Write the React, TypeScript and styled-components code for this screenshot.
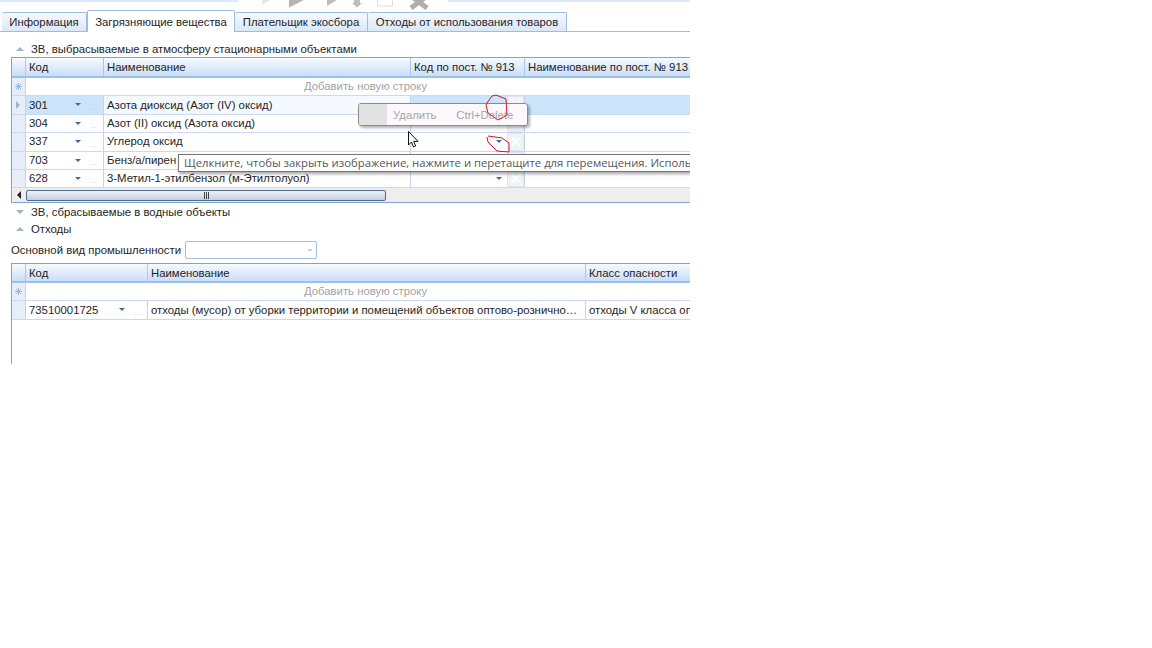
import styled, { createGlobalStyle } from "styled-components";
import { ReactNode } from "react";

const Global = createGlobalStyle`
  html, body { margin: 0; padding: 0; background: #fff; }
  body { font-family: "Liberation Sans", Arial, sans-serif; font-size: 11.35px; color: #1e1e1e; }
`;

const Page = styled.div`
  position: relative;
  width: 690px;
  height: 648px;
  overflow: hidden;
`;

const TopBar = styled.div`
  height: 10px;
`;

const TopLine = styled.div`
  height: 2px;
  background: linear-gradient(to right, #dce8f7 238px, #fff 238px, #fff 448px, #dce8f7 448px);
`;

const ToolIcons = styled.svg`
  position: absolute;
  left: 250px;
  top: 0;
`;

const Tabs = styled.div`
  display: flex;
  align-items: flex-end;
  height: 21px;
  padding-left: 2px;
  border-bottom: 1px solid #9fbcdc;
`;

const Tab = styled.div<{ $active?: boolean; $width: number }>`
  width: ${(p) => p.$width}px;
  height: ${(p) => (p.$active ? 22 : 19)}px;
  box-sizing: border-box;
  display: flex;
  align-items: center;
  justify-content: center;
  border: 1px solid #9fbcdc;
  border-bottom: 0;
  border-left-width: ${(p) => (p.$active ? 1 : 0)}px;
  background: ${(p) => (p.$active ? "#fff" : "linear-gradient(#f6fafe, #d9e7f7)")};
  margin-bottom: ${(p) => (p.$active ? -1 : 0)}px;
  border-radius: 2px 2px 0 0;
  white-space: nowrap;
`;

const Spacer = styled.div<{ $height: number }>`
  height: ${(p) => p.$height}px;
`;

const Section = styled.div`
  display: flex;
  align-items: center;
  height: 17px;
  padding-left: 16px;
  gap: 7px;
`;

const Arrow = styled.span<{ $down?: boolean }>`
  width: 0;
  height: 0;
  border-left: 4px solid transparent;
  border-right: 4px solid transparent;
  ${(p) => (p.$down ? "border-top: 4px solid #9db4cf;" : "border-bottom: 4px solid #9db4cf;")}
`;

const GridBox = styled.div<{ $height: number; $open?: boolean }>`
  margin-left: 11px;
  height: ${(p) => p.$height}px;
  box-sizing: border-box;
  border-left: 1px solid #7da4d3;
  border-top: 1px solid #7da4d3;
  ${(p) => (p.$open ? "" : "border-bottom: 1px solid #7da4d3;")}
  overflow: hidden;
`;

const Row = styled.div<{ $columns: string; $height?: number }>`
  display: grid;
  grid-template-columns: ${(p) => p.$columns};
  height: ${(p) => p.$height ?? 18.4}px;
  box-sizing: border-box;
`;

const HeaderRow = styled(Row)`
  background: linear-gradient(#f7fafe, #c9def8);
  border-bottom: 2px solid #9cc0ec;
`;

const HeaderCell = styled.div`
  display: flex;
  align-items: center;
  padding-left: 3px;
  border-left: 1px solid #a8c8ef;
  white-space: nowrap;
  overflow: hidden;
`;

const Indicator = styled.div`
  background: #e6eefa;
  border-bottom: 1px solid #c9daf0;
  display: flex;
  align-items: center;
  justify-content: center;
`;

const NewRow = styled.div`
  display: flex;
  align-items: center;
  justify-content: center;
  padding: 0 0 1px 15px;
  color: #a3a3a3;
  border-left: 1px solid #c3d6ee;
  border-bottom: 1px solid #c9daf0;
  white-space: nowrap;
`;

const cellBackground = { on: "#cce4fb", light: "#f4f9ff", off: "#fff" };

const Cell = styled.div<{ $tone?: keyof typeof cellBackground }>`
  display: flex;
  align-items: center;
  padding: 0 5px 1px 3px;
  position: relative;
  background: ${(p) => cellBackground[p.$tone ?? "off"]};
  border-left: 1px solid #c3d6ee;
  border-bottom: 1px solid #c9daf0;
  white-space: nowrap;
  overflow: hidden;
`;

const Ellipsis = styled.span`
  overflow: hidden;
  text-overflow: ellipsis;
`;

const Drop = styled.span<{ $right: number; $faint?: boolean }>`
  position: absolute;
  right: ${(p) => p.$right}px;
  top: 7px;
  width: 0;
  height: 0;
  border-left: 3px solid transparent;
  border-right: 3px solid transparent;
  border-top: 3px solid ${(p) => (p.$faint ? "#c9ced6" : "#3f6da3")};
`;

const Dots = styled.span`
  position: absolute;
  right: 6px;
  bottom: 3px;
  font-size: 8px;
  line-height: 6px;
  color: #c5ccd6;
`;

const ClearButton = styled.span`
  position: absolute;
  right: 0;
  top: 0;
  bottom: 0;
  width: 17px;
  box-sizing: border-box;
  display: flex;
  align-items: center;
  justify-content: center;
  background: #f1f4f7;
  border: 1px solid #dfe5ec;
  border-radius: 2px;
`;

const Scroll = styled.div`
  display: flex;
  align-items: center;
  height: 14px;
  background: #efedee;
  padding-left: 5px;
  gap: 5px;
`;

const ScrollLeft = styled.span`
  width: 0;
  height: 0;
  border-top: 4px solid transparent;
  border-bottom: 4px solid transparent;
  border-right: 4px solid #222;
`;

const Thumb = styled.div`
  width: 360px;
  height: 11px;
  box-sizing: border-box;
  border: 1px solid #4f6d90;
  border-radius: 2px;
  background: linear-gradient(#eef2f6, #c2cfdd);
  display: flex;
  align-items: center;
  justify-content: center;
`;

const Grip = styled.span`
  width: 5px;
  height: 7px;
  background: repeating-linear-gradient(to right, #444 0, #444 1px, transparent 1px, transparent 2px);
`;

const FieldRow = styled.div`
  display: flex;
  align-items: center;
  height: 18px;
  margin: 4px 0;
  padding-left: 11px;
  gap: 4px;
`;

const Combo = styled.div`
  position: relative;
  width: 132px;
  height: 18px;
  box-sizing: border-box;
  border: 1px solid #9fc0e6;
  border-radius: 2px;
`;

const Menu = styled.div`
  position: absolute;
  left: 358px;
  top: 103px;
  width: 170px;
  height: 23px;
  box-sizing: border-box;
  display: flex;
  align-items: center;
  background: #fdf8fc;
  border: 1px solid #8c8c8c;
  border-radius: 3px;
  box-shadow: 2px 2px 3px rgba(0, 0, 0, 0.3);
  color: #a5a5a5;
  overflow: hidden;
`;

const MenuGutter = styled.div`
  width: 28px;
  align-self: stretch;
  background: #e2e2e2;
  margin-right: 6px;
`;

const MenuShortcut = styled.span`
  margin-left: 20px;
`;

const Tooltip = styled.div`
  position: absolute;
  left: 178px;
  top: 154px;
  width: 530px;
  height: 18px;
  box-sizing: border-box;
  padding: 0 0 1px 5px;
  display: flex;
  align-items: center;
  background: #fff;
  border: 1px solid #767676;
  box-shadow: 1px 2px 3px rgba(0, 0, 0, 0.35);
  color: #575757;
  font-family: "Open Sans", "Liberation Sans", sans-serif;
  font-size: 11.3px;
  white-space: nowrap;
`;

const Overlay = styled.svg`
  position: absolute;
  left: 0;
  top: 0;
  pointer-events: none;
`;

const topColumns = "13px 78px 307px 114px 1fr";
const wasteColumns = "13px 122px 438px 1fr";

const substances = [
  ["301", "Азота диоксид (Азот (IV) оксид)"],
  ["304", "Азот (II) оксид (Азота оксид)"],
  ["337", "Углерод оксид"],
  ["703", "Бенз/а/пирен"],
  ["628", "3-Метил-1-этилбензол (м-Этилтолуол)"],
];

function ClearIcon() {
  return (
    <svg width="9" height="9" viewBox="0 0 9 9">
      <path d="M1 1l7 7M8 1L1 8" stroke="#fff" strokeWidth="2" />
    </svg>
  );
}

function SectionTitle({ down, children }: { down?: boolean; children: ReactNode }) {
  return (
    <Section>
      <Arrow $down={down} />
      <span>{children}</span>
    </Section>
  );
}

function AddRow() {
  return (
    <Row $columns="13px 1fr">
      <Indicator>
        <svg width="7" height="7" viewBox="0 0 7 7">
          <path d="M3.500 0v7M0 3.500h7M1 1l5 5M6 1L1 6" stroke="#9cbbe0" />
        </svg>
      </Indicator>
      <NewRow>Добавить новую строку</NewRow>
    </Row>
  );
}

export default function App() {
  return (
    <Page>
      <Global />
      <TopBar>
        <TopLine />
      </TopBar>
      <ToolIcons width="190" height="10" viewBox="0 0 190 10">
        <path d="M20 0L12 5V0z" fill="#e6e6e6" />
        <path d="M39 0V7.500L54 0z" fill="#b4b4b4" />
        <path d="M77 0V6L87 0z" fill="#bdbdbd" />
        <path d="M104 0h6v3h2l-5 4.500L102 3h2z" fill="#bcbcbc" />
        <rect x="127.500" y="-2" width="15" height="8" fill="#fff" stroke="#dedede" />
        <path d="M161-4L177 8M177-4L161 8" fill="none" stroke="#adadad" strokeWidth="5" />
      </ToolIcons>

      <Tabs>
        <Tab $width={85}>Информация</Tab>
        <Tab $width={148} $active>Загрязняющие вещества</Tab>
        <Tab $width={133}>Плательщик экосбора</Tab>
        <Tab $width={199}>Отходы от использования товаров</Tab>
      </Tabs>

      <Spacer $height={8} />
      <SectionTitle>ЗВ, выбрасываемые в атмосферу стационарными объектами</SectionTitle>
      <GridBox $height={146}>
        <HeaderRow $columns={topColumns} $height={20}>
          <div />
          <HeaderCell>Код</HeaderCell>
          <HeaderCell>Наименование</HeaderCell>
          <HeaderCell>Код по пост. № 913</HeaderCell>
          <HeaderCell>Наименование по пост. № 913</HeaderCell>
        </HeaderRow>
        <AddRow />
        {substances.map(([code, name], i) => (
          <Row $columns={topColumns} key={code}>
            <Indicator>
              {i === 0 && (
                <svg width="5" height="8" viewBox="0 0 5 8">
                  <path d="M0 0l4 4-4 4z" fill="#9db4cf" />
                </svg>
              )}
            </Indicator>
            <Cell $tone={i === 0 ? "on" : "off"}>
              {code}
              <Drop $right={22} />
              <Dots>...</Dots>
            </Cell>
            <Cell $tone={i === 0 ? "light" : "off"}>{name}</Cell>
            <Cell $tone={i === 0 ? "on" : "off"}>
              <Drop $right={22} />
              <ClearButton>
                <ClearIcon />
              </ClearButton>
            </Cell>
            <Cell $tone={i === 0 ? "on" : "off"} />
          </Row>
        ))}
        <Scroll>
          <ScrollLeft />
          <Thumb>
            <Grip />
          </Thumb>
        </Scroll>
      </GridBox>

      <SectionTitle down>ЗВ, сбрасываемые в водные объекты</SectionTitle>
      <SectionTitle>Отходы</SectionTitle>
      <FieldRow>
        <span>Основной вид промышленности</span>
        <Combo>
          <Drop $right={3} $faint />
        </Combo>
      </FieldRow>

      <GridBox $height={101} $open>
        <HeaderRow $columns={wasteColumns} $height={19}>
          <div />
          <HeaderCell>Код</HeaderCell>
          <HeaderCell>Наименование</HeaderCell>
          <HeaderCell>Класс опасности</HeaderCell>
        </HeaderRow>
        <AddRow />
        <Row $columns={wasteColumns}>
          <Indicator />
          <Cell>
            73510001725
            <Drop $right={22} />
            <Dots>...</Dots>
          </Cell>
          <Cell>
            <Ellipsis>отходы (мусор) от уборки территории и помещений объектов оптово-розничной торговли</Ellipsis>
          </Cell>
          <Cell>отходы V класса опасности</Cell>
        </Row>
      </GridBox>

      <Menu>
        <MenuGutter />
        <span>Удалить</span>
        <MenuShortcut>Ctrl+Delete</MenuShortcut>
      </Menu>
      <Tooltip>Щелкните, чтобы закрыть изображение, нажмите и перетащите для перемещения. Используйте</Tooltip>

      <Overlay width="690" height="200" viewBox="0 0 690 200">
        <path
          d="M486 105l1-2 5-7 4-1 10 4 1 16-9 5-10-7z"
          fill="none"
          stroke="#e01020"
          strokeWidth="1"
        />
        <path
          d="M487 137l1 5 9 9 12 1v-9l-7-5-14-2"
          fill="none"
          stroke="#e01020"
          strokeWidth="1"
        />
        <path
          d="M408.500 131.500v13.500l3-3 2 5 2.200-1-2-4.600h4.300z"
          fill="#fff"
          stroke="#111"
          strokeWidth="1"
        />
      </Overlay>
    </Page>
  );
}
